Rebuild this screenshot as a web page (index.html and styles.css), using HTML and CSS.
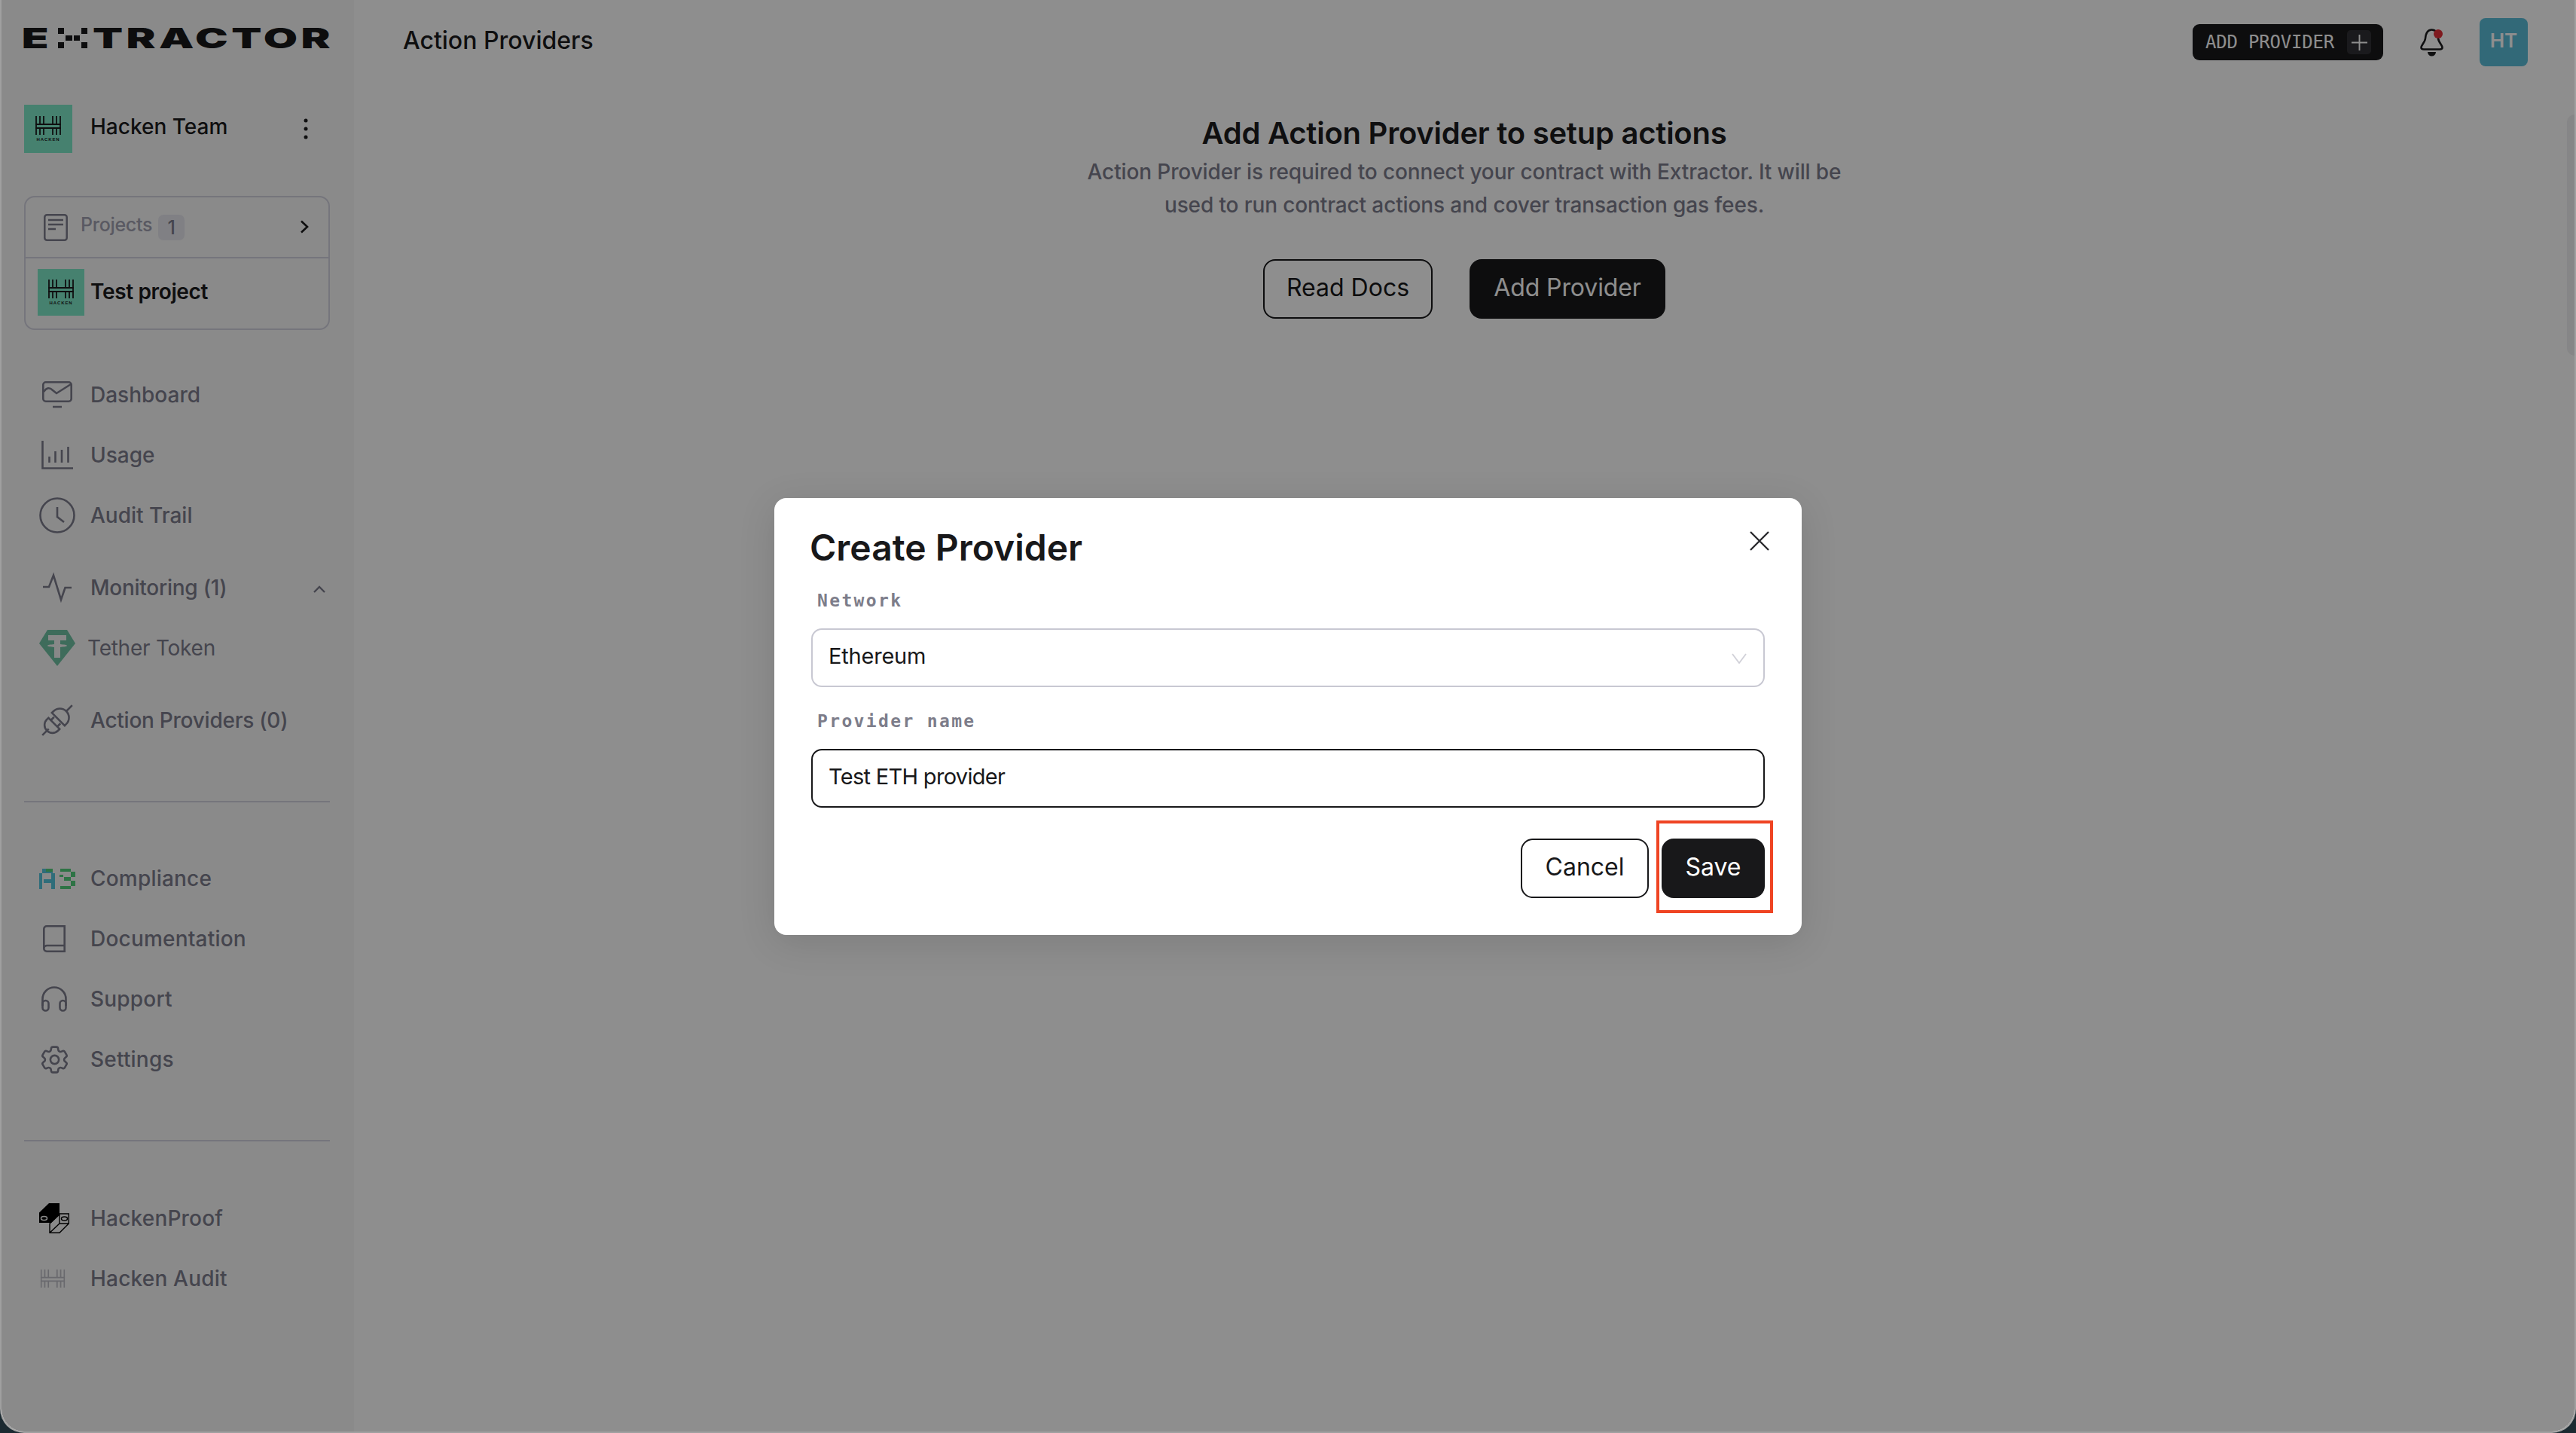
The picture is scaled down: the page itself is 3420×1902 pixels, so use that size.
FILE: index.html
```html
<!DOCTYPE html>
<html lang="en">
<head>
<meta charset="utf-8">
<title>Action Providers</title>
<link rel="stylesheet" href="styles.css">
</head>
<body>
<svg class="defs" width="0" height="0" aria-hidden="true">
  <symbol id="hacken-mark" viewBox="0 0 34 25">
    <g fill="none" stroke="currentColor" stroke-width="1.800">
      <path d="M1 0V25M6 0V11M6 16V25M11 0V11M11 16V25M23 0V11M23 16V25M28 0V11M28 16V25M33 0V25"/>
      <path d="M0 11H34M0 16H34" />
    </g>
  </symbol>
</svg>
<div class="app">
  <aside class="sidebar">
    <div class="logo" aria-label="EXTRACTOR">
      <span class="logo-e">E</span>
      <svg class="logo-x" viewBox="0 0 39 27" aria-hidden="true"><path d="M0 0h8v8H0zM31 0h8v8h-8zM10 10h9v7h-9zM21 10h8v7h-8zM0 19h8v8H0zM31 19h8v8h-8z"/></svg>
      <span class="logo-rest">TRACTOR</span>
    </div>

    <div class="team">
      <div class="avatar-green team-avatar">
        <svg class="mark" viewBox="0 0 34 25"><use href="#hacken-mark"/></svg>
        <span class="mark-word">HACKEN</span>
      </div>
      <span class="team-name">Hacken Team</span>
      <svg class="kebab" viewBox="0 0 6 28"><circle cx="3" cy="3" r="2.500"/><circle cx="3" cy="14" r="2.500"/><circle cx="3" cy="25" r="2.500"/></svg>
    </div>

    <div class="projects">
      <div class="projects-head">
        <svg class="doc-icon" viewBox="0 0 32 36" fill="none" stroke="currentColor" stroke-width="2.500"><rect x="1.300" y="1.300" width="29.400" height="33.400" rx="3"/><path d="M6 8H26M6 14H26M6 20H16"/></svg>
        <span class="projects-label">Projects</span>
        <span class="badge">1</span>
        <svg class="chev-right" viewBox="0 0 12 18" fill="none" stroke="currentColor" stroke-width="2.600"><path d="M2 1.500L10 9L2 16.500"/></svg>
      </div>
      <div class="project-row">
        <div class="avatar-green project-avatar">
          <svg class="mark" viewBox="0 0 34 25"><use href="#hacken-mark"/></svg>
          <span class="mark-word">HACKEN</span>
        </div>
        <span class="project-name">Test project</span>
      </div>
    </div>

    <nav class="nav-group first-group">
      <a class="nav-row"><span class="slot"><svg class="ico" width="40" height="36" viewBox="0 0 40 36"><rect x="1.300" y="1.300" width="37.400" height="25.400" rx="3.500"/><path d="M2 14C6 8 10 8 14 12L19 16L38 4M14 34H26"/></svg></span>Dashboard</a>
      <a class="nav-row"><span class="slot"><svg class="ico" width="42" height="38" viewBox="0 0 42 38"><path d="M1.500 0V36.500H42M10.500 29V21M18.500 29V14M27 29V12M35.500 29V8"/></svg></span>Usage</a>
      <a class="nav-row"><span class="slot"><svg class="ico" width="48" height="48" viewBox="0 0 48 48"><circle cx="24" cy="24" r="22.500"/><path d="M24 13V26L33 33"/></svg></span>Audit Trail</a>
    </nav>

    <nav class="nav-group mid-group">
      <a class="nav-row nav-tight"><span class="slot"><svg class="ico" width="38" height="36" viewBox="0 0 38 36"><path d="M0 17H8L14 1.500L24 34L29.500 18H38"/></svg></span>Monitoring (1)<svg class="chev-up" viewBox="0 0 16 10" fill="none" stroke="currentColor" stroke-width="2.400"><path d="M1 9L8 2L15 9"/></svg></a>
      <a class="nav-row nav-tight tether-row"><span class="slot slot-tether"><svg width="48" height="48" viewBox="0 0 48 48"><path class="tether-bg" d="M11 0H37L48 18L24 48L0 18Z"/><path class="tether-t" d="M12 7H36V14H28V19C33 19.500 37 20 37 21C37 22 33 22.500 28 23V37H20V23C15 22.500 11 22 11 21C11 20 15 19.500 20 19V14H12Z"/></svg></span>Tether Token</a>
    </nav>

    <nav class="nav-group plug-group">
      <a class="nav-row nav-tight"><span class="slot"><svg class="ico" width="44" height="44" viewBox="0 0 44 44"><g transform="rotate(-45 22 22)"><path d="M-6 22H6M16 11.500H13A10.500 10.500 0 0 0 13 32.500H16ZM16 16H22M16 28H22M24 10V34H27A12 12 0 0 0 27 10ZM39 22H50"/></g></svg></span>Action Providers (0)</a>
    </nav>

    <hr class="rule rule-one">

    <nav class="nav-group nav-wide">
      <a class="nav-row"><span class="slot"><svg width="48" height="27" viewBox="0 0 48 27"><path class="c-teal" d="M0 6h4v21H0zM4 0h14v6H4zM6 14h10v5H6zM16 6h5v21h-5z"/><path class="c-green" d="M9 0h9v4H9zM28 0h14v4H28zM42 4h6v7h-6zM33 11h9v5h-9zM42 16h6v7h-6zM28 23h14v4H28zM27 8h5v3h-5z"/></svg></span>Compliance</a>
      <a class="nav-row"><span class="slot slot-narrow"><svg class="ico" width="30" height="36" viewBox="0 0 30 36"><path d="M5 1.300H28.700V34.700H5A3.700 3.700 0 0 1 1.300 31V5A3.700 3.700 0 0 1 5 1.300ZM1.300 31A4 4 0 0 1 5 27H28.700"/></svg></span>Documentation</a>
      <a class="nav-row"><span class="slot slot-narrow"><svg class="ico" width="34" height="34" viewBox="0 0 34 34"><path d="M1.500 26V17A15.500 15.500 0 0 1 32.500 17V26"/><rect x="1.500" y="19" width="8" height="13.500" rx="4"/><rect x="24.500" y="19" width="8" height="13.500" rx="4"/></svg></span>Support</a>
      <a class="nav-row"><span class="slot slot-narrow"><svg class="ico gear" width="45" height="45" viewBox="0 0 24 24"><path d="M9.594 3.940c.09-.542.56-.94 1.110-.94h2.593c.55 0 1.020.398 1.110.94l.213 1.281c.063.374.313.686.645.870.074.040.147.083.220.127.325.196.720.257 1.075.124l1.217-.456a1.125 1.125 0 0 1 1.370.490l1.296 2.247a1.125 1.125 0 0 1-.260 1.431l-1.003.827c-.293.241-.438.613-.430.992a7.723 7.723 0 0 1 0 .255c-.008.378.137.750.430.991l1.004.827c.424.350.534.955.260 1.430l-1.298 2.247a1.125 1.125 0 0 1-1.369.491l-1.217-.456c-.355-.133-.750-.072-1.076.124a6.470 6.470 0 0 1-.220.128c-.331.183-.581.495-.644.869l-.213 1.281c-.090.543-.560.940-1.110.940h-2.594c-.550 0-1.019-.398-1.110-.940l-.213-1.281c-.062-.374-.312-.686-.644-.870a6.520 6.520 0 0 1-.220-.127c-.325-.196-.720-.257-1.076-.124l-1.217.456a1.125 1.125 0 0 1-1.369-.490l-1.297-2.247a1.125 1.125 0 0 1 .260-1.431l1.004-.827c.292-.240.437-.613.430-.991a6.932 6.932 0 0 1 0-.255c.007-.380-.138-.751-.430-.992l-1.004-.827a1.125 1.125 0 0 1-.260-1.430l1.297-2.247a1.125 1.125 0 0 1 1.370-.491l1.216.456c.356.133.751.072 1.076-.124.072-.044.146-.086.220-.128.332-.183.582-.495.644-.869l.214-1.280Z"/><circle cx="12" cy="12" r="3"/></svg></span>Settings</a>
    </nav>

    <hr class="rule rule-two">

    <nav class="nav-group nav-wide">
      <a class="nav-row"><span class="slot slot-narrow"><svg width="40" height="40" viewBox="0 0 40 40"><path class="hp-solid" d="M0 12.500L13 0H27V15L16 26H0Z"/><ellipse class="hp-hole" cx="6.500" cy="20" rx="4" ry="2.500"/><path class="hp-line" d="M14 39.300V27L27 15V14H39.300V27L27 39.300ZM14 39.300L27 27H39.300M27 27V15"/><ellipse class="hp-line" cx="33.500" cy="20.500" rx="4" ry="2.500"/></svg></span>HackenProof</a>
      <a class="nav-row"><span class="slot slot-narrow slot-audit"><svg class="audit-mark" width="34" height="24" viewBox="0 0 34 25"><use href="#hacken-mark"/></svg></span>Hacken Audit</a>
    </nav>
  </aside>

  <main class="main">
    <header class="topbar">
      <h1 class="page-title">Action Providers</h1>
      <div class="top-actions">
        <button class="add-mono">ADD PROVIDER<span class="plus-box"><svg viewBox="0 0 22 22" fill="none" stroke="currentColor" stroke-width="2"><path d="M11 0V22M0 11H22"/></svg></span></button>
        <svg class="bell" viewBox="0 0 31 37"><path class="bell-line" d="M15.500 1.500C9 1.500 7.500 7 7 13C6.500 18 1.500 22 1.500 25C1.500 27 3 27.500 5 27.500H26C28 27.500 29.500 27 29.500 25C29.500 22 24.500 18 24 13C23.500 7 22 1.500 15.500 1.500Z"/><path class="bell-fill" d="M10 31H21A5.500 5.500 0 0 1 10 31Z"/><circle class="bell-dot" cx="24" cy="7" r="6"/></svg>
        <div class="user-avatar">HT</div>
      </div>
    </header>
    <section class="empty">
      <h2 class="empty-title">Add Action Provider to setup actions</h2>
      <p class="empty-text">Action Provider is required to connect your contract with Extractor. It will be<br>used to run contract actions and cover transaction gas fees.</p>
      <div class="empty-actions">
        <button class="btn btn-outline btn-docs">Read Docs</button>
        <button class="btn btn-solid btn-add">Add Provider</button>
      </div>
    </section>
    <div class="scroll-thumb"></div>
  </main>

  <div class="overlay">
    <div class="modal">
      <svg class="close" viewBox="0 0 26 26" fill="none" stroke="currentColor" stroke-width="2.400"><path d="M1 1L25 25M25 1L1 25"/></svg>
      <h2 class="modal-title">Create Provider</h2>
      <label class="field-label label-first">Network</label>
      <div class="field field-select">Ethereum<svg class="select-chev" viewBox="0 0 20 14" fill="none" stroke="currentColor" stroke-width="1.800"><path d="M1 1L10 13L19 1"/></svg></div>
      <label class="field-label">Provider name</label>
      <div class="field field-active">Test ETH provider</div>
      <div class="modal-actions">
        <button class="btn btn-outline btn-cancel">Cancel</button>
        <button class="btn btn-solid btn-save">Save</button>
      </div>
    </div>
  </div>
</div>
</body>
</html>
```

FILE: styles.css
```css
* { box-sizing: border-box; }
html, body { margin: 0; height: 100%; }
body {
  background: #1b2a31;
  font-family: Inter, "Liberation Sans", sans-serif;
  overflow: hidden;
}
.defs { position: absolute; }

.app {
  position: relative;
  display: flex;
  height: 100vh;
  border: 2px solid #a0a0a0;
  border-top: 0;
  border-radius: 0 0 32px 32px;
  overflow: hidden;
  background: #fff;
}

/* Sidebar */
.sidebar {
  width: 468px;
  flex: none;
  padding: 37px 32px 0 30px;
  background: #f8f8f8;
}
.logo {
  display: flex;
  height: 27px;
  color: #18181a;
}
.logo-e, .logo-rest {
  display: block;
  font-size: 37px;
  line-height: 27px;
  font-weight: 900;
  transform-origin: left center;
  transform: scaleX(1.58);
  white-space: nowrap;
}
.logo-e { width: 45px; text-indent: -2px; }
.logo-rest { letter-spacing: 2.800px; }
.logo-x { width: 39px; height: 27px; margin-right: 7px; fill: #18181a; flex: none; }

.team {
  display: flex;
  align-items: center;
  height: 64px;
  margin-top: 75px;
}
.avatar-green {
  display: flex;
  flex-direction: column;
  align-items: center;
  justify-content: center;
  background: #7fe8c8;
  color: #1b1b1d;
  flex: none;
}
.team-avatar { width: 64px; height: 64px; margin-right: 24px; }
.project-avatar { width: 62px; height: 62px; margin-right: 8px; }
.mark { width: 34px; height: 25px; }
.mark-word {
  margin-top: 3px;
  font-family: "Liberation Sans", sans-serif;
  font-size: 6px;
  line-height: 6px;
  font-weight: 700;
  letter-spacing: .9px;
}
.team-name {
  flex: 1;
  margin-top: -6px;
  font-size: 28px;
  font-weight: 500;
  color: #1b1b1d;
}
.kebab { width: 6px; height: 28px; margin-right: 29px; fill: #1b1b1d; }

.projects {
  height: 178px;
  margin-top: 57px;
  border: 2px solid #d2d2de;
  border-radius: 14px;
}
.projects-head {
  display: flex;
  align-items: center;
  height: 81px;
  padding: 0 24px;
  border-bottom: 2px solid #d2d2de;
}
.doc-icon { width: 32px; height: 36px; color: #7c7c8c; margin-right: 17px; flex: none; }
.projects-label { font-size: 25px; font-weight: 500; color: #a1a1b0; letter-spacing: -.3px; margin-top: -7px; }
.badge {
  display: flex;
  align-items: center;
  justify-content: center;
  width: 35px;
  height: 34px;
  margin-left: 8px;
  border-radius: 7px;
  background: #e6e6ee;
  color: #7c7c8c;
  font-size: 25px;
  font-weight: 500;
}
.chev-right { width: 12px; height: 18px; margin-left: auto; margin-right: 2px; color: #1b1b1d; margin-top: -2px; }
.project-row { display: flex; align-items: center; height: 93px; padding: 0 0 4px 16px; }
.project-name { margin-top: -2px; font-size: 28px; font-weight: 600; letter-spacing: -.35px; color: #1b1b1d; }

/* Navigation */
.first-group { margin-top: 46px; }
.mid-group { margin-top: 16px; }
.plug-group { margin-top: 16px; }
.nav-row {
  display: flex;
  align-items: center;
  height: 80px;
  font-size: 28px;
  font-weight: 500;
  color: #7c7c8c;
}
.nav-tight { letter-spacing: -.25px; }
.nav-wide { letter-spacing: .2px; }
.slot {
  display: flex;
  align-items: center;
  justify-content: center;
  width: 88px;
  flex: none;
}
.slot-narrow { width: 80px; margin-right: 8px; }
.slot-tether { width: 84px; justify-content: flex-start; padding-left: 20px; }
.tether-row { font-weight: 400; }
.slot-audit { padding-right: 4px; }
.ico { fill: none; stroke: #7c7c8c; stroke-width: 2.600; overflow: visible; flex: none; }
.gear { stroke-width: 1.400; }
.chev-up { width: 16px; height: 10px; margin-left: auto; margin-right: 6px; margin-top: 4px; color: #7c7c8c; }
.tether-bg { fill: #6fc2a4; }
.tether-t { fill: #f4f4f4; }
.c-teal { fill: #55c4dc; }
.c-green { fill: #54cf7d; }
.hp-solid { fill: #000; }
.hp-hole { fill: none; stroke: #fff; stroke-width: 1.500; }
.hp-line { fill: none; stroke: #000; stroke-width: 1.400; }
.audit-mark { color: #bcbcc4; }

.rule { height: 2px; margin: 0; border: 0; background: #d2d2de; }
.rule-one { margin-top: 67px; margin-bottom: 61px; }
.rule-two { margin-top: 67px; margin-bottom: 62px; }

/* Main */
.main { position: relative; flex: 1; min-width: 0; background: #fff; }
.topbar {
  display: flex;
  align-items: center;
  justify-content: space-between;
  height: 64px;
  margin-top: 24px;
  padding: 0 62px 0 65px;
}
.page-title {
  margin: -5px 0 0;
  font-size: 32px;
  font-weight: 500;
  color: #1b1b1d;
}
.top-actions { display: flex; align-items: center; }
.add-mono {
  display: flex;
  align-items: center;
  justify-content: space-between;
  width: 253px;
  height: 48px;
  margin-right: 49px;
  padding: 0 16px 0 17px;
  border: 0;
  border-radius: 9px;
  background: #18181a;
  color: #fff;
  font-family: "DejaVu Sans Mono", "Liberation Mono", monospace;
  font-size: 24px;
  font-weight: 400;
  letter-spacing: -.2px;
}
.plus-box {
  display: flex;
  align-items: center;
  justify-content: center;
  width: 32px;
  height: 32px;
  border-radius: 5px;
  background: #303034;
}
.plus-box svg { width: 21px; height: 21px; }
.bell { width: 31px; height: 37px; margin-right: 48px; overflow: visible; }
.bell-line { fill: none; stroke: #1b1b1d; stroke-width: 2.600; }
.bell-fill { fill: #1b1b1d; }
.bell-dot { fill: #e42f38; }
.user-avatar {
  display: flex;
  align-items: center;
  justify-content: center;
  width: 64px;
  height: 64px;
  padding-bottom: 6px;
  border-radius: 8px;
  background: #5bbdd8;
  color: #fff;
  font-size: 26px;
  font-weight: 600;
}
.empty { display: flex; flex-direction: column; align-items: center; margin-top: 64px; }
.empty-title {
  margin: 0;
  font-size: 40px;
  line-height: 50px;
  font-weight: 600;
  letter-spacing: -.25px;
  color: #1b1b1d;
}
.empty-text {
  margin: 4px 0 0;
  font-size: 28px;
  line-height: 44px;
  font-weight: 500;
  letter-spacing: -.12px;
  text-align: center;
  color: #7c7c8c;
}
.empty-actions { display: flex; gap: 49px; margin-top: 50px; }
.btn {
  display: flex;
  align-items: center;
  justify-content: center;
  height: 79px;
  padding: 0 0 4px;
  border-radius: 16px;
  font-family: Inter, "Liberation Sans", sans-serif;
  font-size: 32px;
  font-weight: 400;
}
.btn-outline { border: 2px solid #18181a; background: #fff; color: #18181a; }
.btn-solid { position: relative; border: 0; background: #18181a; color: #fff; }
.btn-docs { width: 225px; }
.btn-add { width: 260px; letter-spacing: -.1px; }
.btn-cancel { width: 170px; }
.btn-save { width: 137px; }
.btn-save::after {
  content: "";
  position: absolute;
  top: -24px;
  right: -11px;
  bottom: -20px;
  left: -7px;
  border: 4px solid #ef4423;
}
.scroll-thumb {
  position: absolute;
  top: 152px;
  right: 0;
  width: 10px;
  height: 320px;
  border-radius: 10px 0 0 10px;
  background: #f0f0f2;
}

/* Modal */
.overlay {
  position: absolute;
  inset: 0;
  display: flex;
  align-items: center;
  justify-content: center;
  padding-top: 2px;
  background: rgba(0, 0, 0, .443);
}
.modal {
  position: relative;
  width: 1364px;
  height: 580px;
  padding: 36px 49px 49px;
  border-radius: 16px;
  background: #fff;
  box-shadow: 0 10px 50px rgba(0, 0, 0, .12);
}
.close { position: absolute; top: 44px; right: 43px; width: 26px; height: 26px; color: #2a2a2e; }
.modal-title {
  margin: 0 0 0 -2px;
  font-size: 48px;
  line-height: 60px;
  font-weight: 600;
  letter-spacing: 0;
  color: #18181a;
}
.field-label {
  display: block;
  height: 30px;
  margin-top: 30px;
  padding-left: 8px;
  font-family: "DejaVu Sans Mono", "Liberation Mono", monospace;
  font-size: 23px;
  line-height: 30px;
  font-weight: 700;
  letter-spacing: 2.350px;
  color: #7d7d8a;
}
.label-first { margin-top: 25px; }
.field {
  position: relative;
  display: flex;
  align-items: center;
  height: 78px;
  margin-top: 22px;
  padding: 0 21px 5px;
  border-radius: 14px;
  background: #fff;
  font-size: 29px;
  letter-spacing: -.2px;
  color: #18181a;
}
.field-select { border: 2px solid #c8c8d2; justify-content: space-between; }
.field-active { border: 2px solid #18181a; letter-spacing: -.7px; }
.select-chev { width: 20px; height: 14px; margin-right: 1px; margin-top: 6px; color: #d0d0d8; }
.modal-actions { display: flex; justify-content: flex-end; gap: 17px; margin-top: 41px; }
```
